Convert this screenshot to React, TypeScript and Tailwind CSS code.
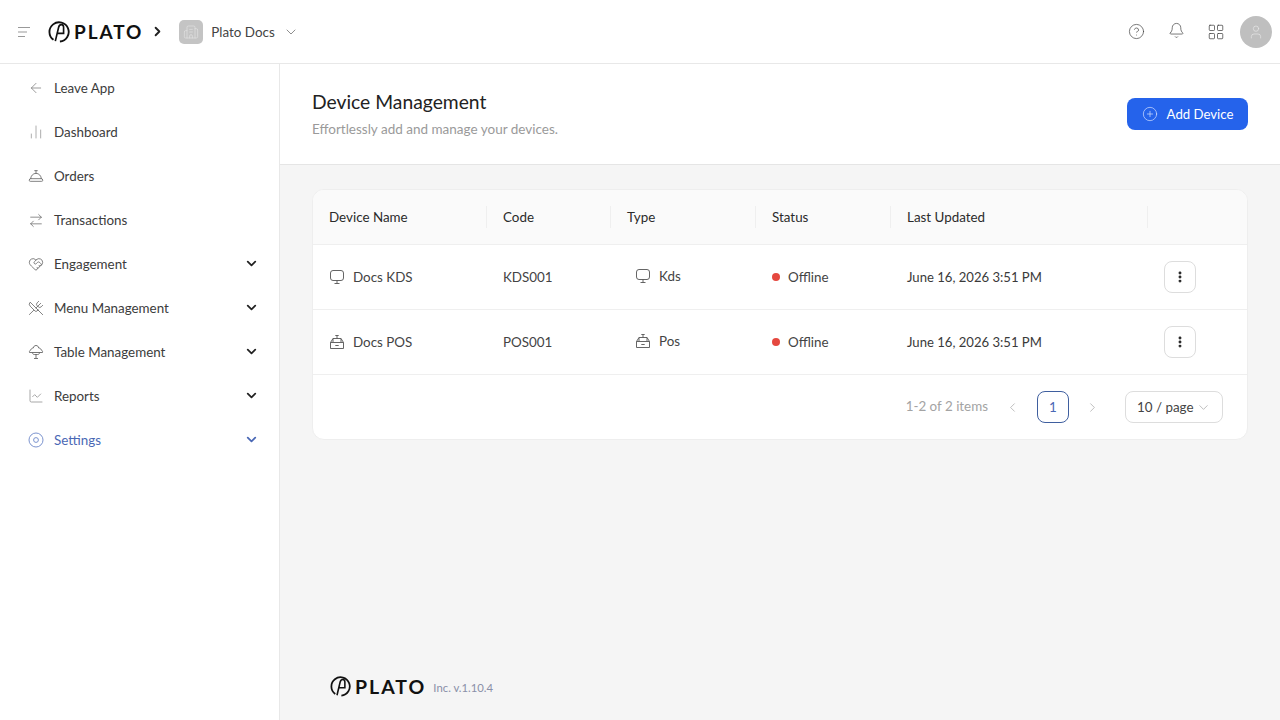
import React from 'react';
import {
  ArrowLeft,
  ArrowRightLeft,
  Bell,
  ChartLine,
  ChartNoAxesColumn,
  ChevronDown,
  ChevronLeft,
  ChevronRight,
  CirclePlus,
  CircleHelp,
  ConciergeBell,
  EllipsisVertical,
  HeartHandshake,
  LayoutGrid,
  Building2,
  User,
  UtensilsCrossed,
} from 'lucide-react';

const PlatoMark = ({ size }: { size: number }) => (
  <svg width={size} height={size} viewBox="0 0 24 24" fill="none" stroke="#111" strokeWidth="2">
    <path d="M6 20.500A10.500 10.500 0 1 1 13 22.400" />
    <path d="M8 22l3.600-15.200c.5-2 1.800-2.800 3-2.800 1.500 0 2.400 1.200 2.400 2.800V13.500H9.500" strokeWidth="1.800" />
  </svg>
);

const PlatoLogo = ({ mark, text, gap }: { mark: number; text: string; gap: string }) => (
  <div className={`flex items-center ${gap}`}>
    <PlatoMark size={mark} />
    <span className={`font-['Lato',sans-serif] font-bold text-[#111] ${text}`}>PLATO</span>
  </div>
);

const TableIcon = () => (
  <svg width="16" height="16" viewBox="0 0 16 16" fill="none" stroke="#666" strokeWidth="0.900" strokeLinejoin="round">
    <path d="M8 1.500C6.500 1.500 5.500 2.500 5.300 4 3.800 4 3 5 2.800 6 1.800 6.300 1.200 7.200 1.500 8.500h13c.3-1.300-.3-2.200-1.300-2.500-.2-1-1-2-2.500-2C10.500 2.500 9.500 1.500 8 1.500Z" />
    <path d="M4.500 8.500c0 1.500.8 2 1.800 2h3.400c1 0 1.800-.5 1.800-2M8 10.500v4M6 14.500h4" />
  </svg>
);

const SettingsIcon = () => (
  <svg width="16" height="16" viewBox="0 0 16 16" fill="none" stroke="#6d88c8" strokeWidth="0.900">
    <circle cx="8" cy="8" r="7" />
    <circle cx="8" cy="8" r="2.400" />
  </svg>
);

const MonitorIcon = () => (
  <svg width="16" height="16" viewBox="0 0 16 16" fill="none" stroke="#555" strokeWidth="0.900">
    <rect x="1.500" y="1.500" width="13" height="10" rx="2.500" />
    <path d="M5.500 14.500h5M8 11.500v3" />
  </svg>
);

const PosIcon = () => (
  <svg width="16" height="16" viewBox="0 0 16 16" fill="none" stroke="#555" strokeWidth="0.900" strokeLinejoin="round">
    <path d="M4 8V4.500h8V8M8 4.500V1.500M6.300 1.500h3.400" />
    <path d="M1.500 8.500h13v6h-13zM1.500 8.500 4 4.500M14.500 8.500 12 4.500M6.300 11.500h3.400" />
  </svg>
);

const navItems = [
  { label: 'Leave App', icon: <ArrowLeft size={16} strokeWidth={1.100} color="#777" /> },
  { label: 'Dashboard', icon: <ChartNoAxesColumn size={18} strokeWidth={1.200} color="#999" /> },
  { label: 'Orders', icon: <ConciergeBell size={18} strokeWidth={1.100} color="#555" /> },
  { label: 'Transactions', icon: <ArrowRightLeft size={17} strokeWidth={1.100} color="#666" /> },
  { label: 'Engagement', icon: <HeartHandshake size={18} strokeWidth={1.100} color="#555" />, arrow: true },
  { label: 'Menu Management', icon: <UtensilsCrossed size={18} strokeWidth={1.100} color="#555" />, arrow: true },
  { label: 'Table Management', icon: <TableIcon />, arrow: true },
  { label: 'Reports', icon: <ChartLine size={18} strokeWidth={1.100} color="#888" />, arrow: true },
  { label: 'Settings', icon: <SettingsIcon />, arrow: true, active: true },
];

const devices = [
  { name: 'Docs KDS', code: 'KDS001', type: 'Kds', icon: <MonitorIcon /> },
  { name: 'Docs POS', code: 'POS001', type: 'Pos', icon: <PosIcon /> },
];

const columns = ['Device Name', 'Code', 'Type', 'Status', 'Last Updated', ''];
const gridCols = 'grid grid-cols-[174px_124px_145px_135px_257px_1fr] items-center';

const App = () => {
  return (
    <div className="flex h-[720px] w-[1280px] flex-col overflow-hidden bg-white font-['Lato',sans-serif] text-[13.400px] text-[#333]">
      <header className="flex h-[64px] shrink-0 items-center border-b border-[#e8e8e8] pl-[18px] pr-[8px]">
        <svg width="12" height="10" viewBox="0 0 12 10" stroke="#999" strokeWidth="1" className="mr-[18px]">
          <path d="M0 .5h12M0 5h9M0 9.500h7" />
        </svg>
        <PlatoLogo mark={22} text="text-[19px] tracking-[1.900px] leading-none" gap="gap-[4px]" />
        <ChevronRight size={15} strokeWidth={3} color="#222" className="ml-[7px]" />
        <div className="ml-[14px] flex h-[24px] w-[24px] items-center justify-center rounded-[5px] bg-[#c4c4c4]">
          <Building2 size={16} strokeWidth={1} color="#e4e4e4" />
        </div>
        <span className="ml-[8px] mt-[2px] text-[#444]">Plato Docs</span>
        <ChevronDown size={16} strokeWidth={1} color="#555" className="ml-[8px]" />
        <div className="ml-auto flex items-center">
          <CircleHelp size={17} strokeWidth={1} color="#444" />
          <Bell size={17} strokeWidth={1} color="#444" className="mb-[3px] ml-[23px]" />
          <LayoutGrid size={18} strokeWidth={1} color="#444" className="ml-[22px]" />
          <div className="ml-[15px] flex h-[32px] w-[32px] items-center justify-center rounded-full bg-[#bfbfbf]">
            <User size={16} strokeWidth={1} color="#e8e8e8" />
          </div>
        </div>
      </header>

      <div className="flex min-h-0 flex-1">
        <aside className="w-[280px] shrink-0 border-r border-[#e8e8e8] pl-[28px] pr-[20px] pt-[2px]">
          {navItems.map((item) => (
            <div key={item.label} className={`flex h-[44px] items-center ${item.active ? 'text-[#4a68b5]' : 'text-[#3c3c3c]'}`}>
              <span className="flex w-[16px] justify-center">{item.icon}</span>
              <span className="ml-[10px]">{item.label}</span>
              {item.arrow && (
                <ChevronDown
                  size={15}
                  strokeWidth={2.800}
                  color={item.active ? '#4a68b5' : '#222'}
                  className="mb-[2px] ml-auto"
                />
              )}
            </div>
          ))}
        </aside>

        <main className="flex min-w-0 flex-1 flex-col bg-[#f5f5f5]">
          <div className="flex h-[101px] shrink-0 items-center justify-between border-b border-[#e5e5e5] bg-white pl-[32px] pr-[32px]">
            <div>
              <div className="text-[19.300px] leading-[27px] text-[#222]">Device Management</div>
              <div className="mt-[3px] text-[13.500px] leading-[22px] text-[#9a9a9a]">Effortlessly add and manage your devices.</div>
            </div>
            <button className="flex h-[32px] w-[121px] items-center justify-center gap-[9px] rounded-[8px] bg-[#2563eb] text-[13.200px] text-white">
              <CirclePlus size={16} strokeWidth={1} color="#dbe6ff" />
              <span className="mt-[2px]">Add Device</span>
            </button>
          </div>

          <div className="flex flex-1 flex-col px-[32px] pt-[24px]">
            <div className="overflow-hidden rounded-[12px] border border-[#eeeeee] bg-white">
              <div className={`${gridCols} h-[55px] border-b border-[#efefef] bg-[#fafafa] text-[#2b2b2b]`}>
                {columns.map((col, i) => (
                  <div key={i} className={`flex h-[22px] items-center pl-[16px] ${i < 5 ? 'border-r border-[#efefef]' : ''}`}>
                    <span>{col}</span>
                  </div>
                ))}
              </div>
              {devices.map((d) => (
                <div key={d.code} className={`${gridCols} h-[65px] border-b border-[#efefef] text-[#444]`}>
                  <div className="flex items-center gap-[8px] pl-[16px]">
                    {d.icon}
                    <span>{d.name}</span>
                  </div>
                  <div className="pl-[16px]">{d.code}</div>
                  <div className="flex items-center gap-[8px] pl-[24px]">
                    <span className="mb-[2px]">{d.icon}</span>
                    <span className="mb-[2px]">{d.type}</span>
                  </div>
                  <div className="flex items-center gap-[8px] pl-[16px]">
                    <span className="h-[8px] w-[8px] rounded-full bg-[#e5483f]" />
                    <span>Offline</span>
                  </div>
                  <div className="mt-[2px] pl-[16px] text-[13.100px] text-[#3a3a3a]">June 16, 2026 3:51 PM</div>
                  <div className="pl-[16px]">
                    <button className="flex h-[32px] w-[32px] items-center justify-center rounded-[8px] border border-[#dddddd] bg-white">
                      <EllipsisVertical size={14} strokeWidth={3} color="#222" />
                    </button>
                  </div>
                </div>
              ))}
              <div className="flex h-[64px] items-center justify-end pr-[24px]">
                <span className="mb-[2px] text-[#a3a3a3]">1-2 of 2 items</span>
                <ChevronLeft size={15} strokeWidth={1} color="#999" className="ml-[17px]" />
                <span className="ml-[17px] flex h-[32px] w-[32px] items-center justify-center rounded-[8px] border border-[#3f5f9f] text-[#4a68b5]">1</span>
                <ChevronRight size={15} strokeWidth={1} color="#999" className="ml-[16px]" />
                <div className="ml-[25px] flex h-[32px] w-[98px] items-center justify-between rounded-[8px] border border-[#dddddd] pl-[11px] pr-[11px] text-[#444]">
                  <span>10 / page</span>
                  <ChevronDown size={15} strokeWidth={1} color="#999" />
                </div>
              </div>
            </div>

            <div className="mb-[23px] ml-[18px] mt-auto flex items-center gap-[7px]">
              <PlatoLogo mark={21} text="text-[19.500px] tracking-[2px] leading-none" gap="gap-[4px]" />
              <span className="mt-[3px] text-[11.300px] text-[#8a8fa8]">Inc. v.1.10.4</span>
            </div>
          </div>
        </main>
      </div>
    </div>
  );
};

export default App;
